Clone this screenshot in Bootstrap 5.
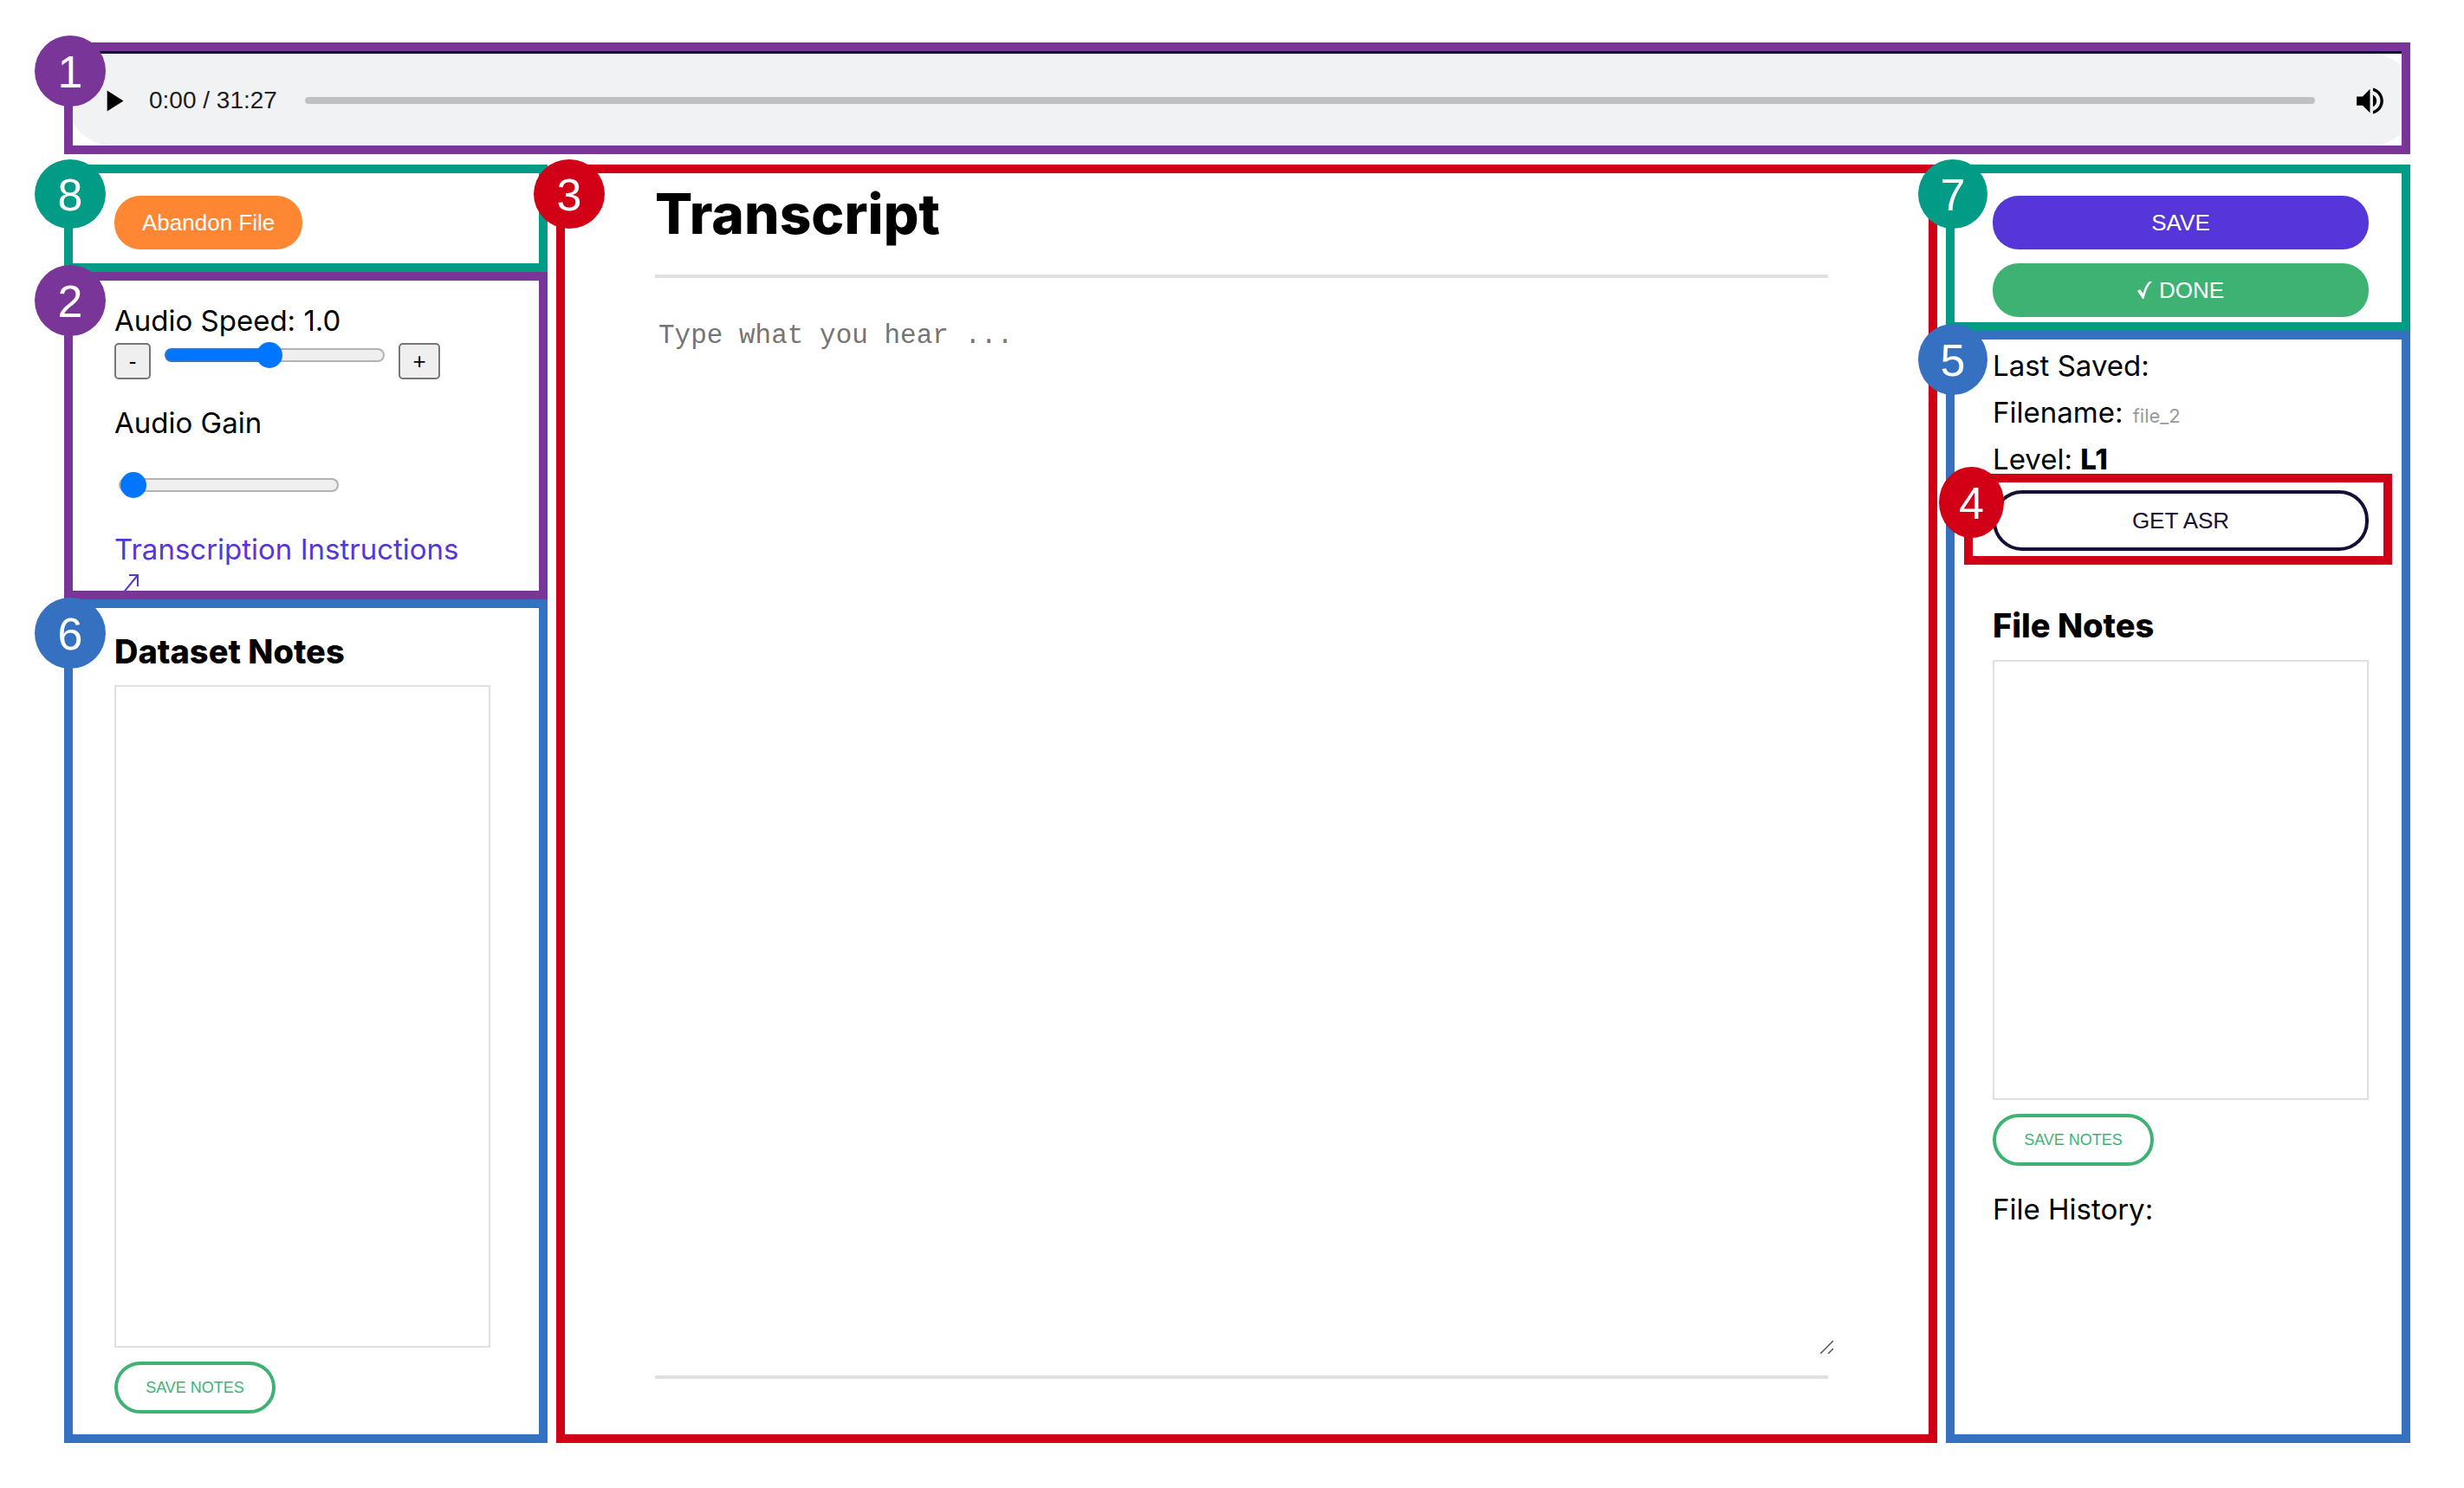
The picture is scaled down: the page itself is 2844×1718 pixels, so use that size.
<!DOCTYPE html>
<html lang="en">
<head>
<meta charset="utf-8">
<meta name="viewport" content="width=device-width, initial-scale=1">
<title>Transcript</title>
<link href="https://cdn.jsdelivr.net/npm/bootstrap@5.3.0/dist/css/bootstrap.min.css" rel="stylesheet">
<style>
  :root { --violet:#793698; --teal:#029b85; --crimson:#d10016; --azure:#3571c0; --ink:#160f38; --indigo:#5636d9; --leaf:#3eb273; --rule:#e0dfe4; }
  body { font-family: Inter, "Liberation Sans", sans-serif; font-size: 33px; line-height: 36px; color: #000; background: #fff; }
  .page { min-height: 100vh; padding: 49px 62px 52px 74px; gap: 12px; }
  .workspace { display: grid; grid-template-columns: 558fr 1594fr 536fr; gap: 10px; }
  .zone { position: relative; border: 10px solid var(--tone); }
  .violet { --tone: var(--violet); } .teal { --tone: var(--teal); } .crimson { --tone: var(--crimson); } .azure { --tone: var(--azure); }

  /* numbered markers over the corners of the zones */
  .marker { position: absolute; z-index: 5; width: 82px; height: 82px; left: -44px; top: -18px; padding-top: 2px; border-radius: 50%; background: var(--tone); color: #fff; font: 52px "Liberation Sans", sans-serif; display: flex; align-items: center; justify-content: center; }
  .marker-flat { top: -16px; height: 80px; }
  .marker-main { left: -36px; }
  .marker-side { left: -42px; width: 80px; }
  .marker-inner { left: -39px; width: 75px; }
  .marker-low { top: -12px; }

  .player-clip { overflow: hidden; border-top: 3px solid var(--ink); }
  .player { height: 106px; margin: 0 -17px 0 -7px; padding: 2px 33px 0; border-radius: 53px; background: #f1f2f4; font: 28px "Liberation Sans", sans-serif; color: #1c1c1c; }
  .player button { border: 0; padding: 0; background: none; line-height: 0; color: #000; }
  .player svg { width: 41px; height: 41px; fill: currentColor; }
  .clock { margin: 0 32px 0 21px; }
  .seek { appearance: none; -webkit-appearance: none; flex: 1 1 0; min-width: 0; height: 8px; border-radius: 4px; background: #bfc0c2; margin: 0 43px 0 0; }
  .seek::-webkit-slider-thumb { -webkit-appearance: none; width: 1px; height: 8px; background: transparent; }

  .pill { border: 0; border-radius: 30px; height: 62px; padding: 0 32px; font: 26px "Liberation Sans", sans-serif; color: #fff; }
  .pill-orange { background: #ff8633; } .pill-indigo { background: var(--indigo); } .pill-leaf { background: var(--leaf); }
  .pill-ink { height: 70px; border: 4px solid var(--ink); border-radius: 34px; background: #fff; color: var(--ink); }
  .pill-notes { width: 186px; height: 60px; padding: 0; border: 4px solid var(--leaf); background: #fff; color: var(--leaf); font-size: 18px; }
  .pill svg { width: 17px; height: 20px; margin-right: 8px; }

  .abandon { padding: 26px 48px 16px; }
  .audio { padding: 28px 48px 0; }
  .stepper { margin: 8px 0 32px; gap: 16px; }
  .step { height: 42px; border: 2px solid #767676; border-radius: 5px; background: #efefef; padding: 0; font: 26px "Liberation Sans", sans-serif; color: #000; }
  .step-down { width: 42px; } .step-up { width: 48px; }
  .slide { --fill: 0%; appearance: none; -webkit-appearance: none; width: 254px; height: 28px; margin: 0; background: none; display: block; }
  .slide::-webkit-slider-runnable-track { height: 16px; border: 2px solid transparent; border-radius: 8px;
    background: linear-gradient(90deg, #0075ff var(--fill), #efefef var(--fill)) padding-box, linear-gradient(90deg, #3673c6 var(--fill), #b2b2b2 var(--fill)) border-box; }
  .slide::-webkit-slider-thumb { -webkit-appearance: none; width: 30px; height: 30px; margin-top: -9px; border: 0; border-radius: 50%; background: #0075ff; }
  .speed { --fill: 48%; }
  .gain { margin: 40px 0 42px 5px; }
  .guide { color: var(--indigo); text-decoration: none; white-space: nowrap; display: block; }
  .guide svg { display: block; width: 40px; height: 30px; }

  h1 { font-size: 64px; line-height: 72px; font-weight: 800; margin: 0 0 34px; }
  h2 { font-size: 38px; line-height: 42px; font-weight: 800; margin: 0 0 18px; }
  b { font-weight: 800; }
  .notes { display: block; width: 100%; border: 2px solid var(--rule); resize: none; margin-bottom: 16px; padding: 8px; }
  .dataset { padding: 29px 56px 24px 48px; }
  .editor { padding: 11px 116px 64px 104px; }
  .rule { height: 4px; border: 0; opacity: 1; margin: 0; background: var(--rule); }
  .sheet { margin: 16px -8px 23px 0; position: relative; }
  .sheet textarea { border: 0; padding: 33px 4px 0; width: 100%; height: 100%; resize: none; display: block; font: 31px/36px "Liberation Mono", monospace; }
  .sheet textarea::placeholder { color: #757575; opacity: 1; }
  .grip { position: absolute; right: 2px; bottom: 2px; width: 15px; height: 15px; }
  .actions { padding: 26px 38px 6px 44px; gap: 16px; }
  .facts { padding: 12px 38px 0 44px; gap: 18px; }
  .facts div { height: 36px; }
  .file-id { font-size: 22px; line-height: 1; color: #999; margin-left: 2px; }
  .asr { margin: -1px 11px 0; padding: 9px 17px 6px 23px; }
  .filenotes { padding: 49px 38px 0 44px; }
  .filenotes h2 { margin-bottom: 19px; }
  .filenotes .notes { height: 508px; }
  .history { margin-top: 32px; }
</style>
<script src="https://cdn.jsdelivr.net/npm/bootstrap@5.3.0/dist/js/bootstrap.bundle.min.js"></script>
</head>
<body>
<div class="page d-flex flex-column">
  <header class="zone violet">
    <span class="marker">1</span>
    <div class="player-clip">
      <div class="player d-flex align-items-center">
        <button type="button" aria-label="Play"><svg viewBox="0 0 24 24"><path d="M8 5v14l11-7z"/></svg></button>
        <span class="clock">0:00 / 31:27</span>
        <input class="seek" type="range" min="0" max="1887" value="0" aria-label="Seek">
        <button type="button" aria-label="Mute"><svg viewBox="0 0 24 24"><path d="M3 9v6h4l5 5V4L7 9H3zm13.5 3c0-1.77-1.02-3.29-2.5-4.03v8.05c1.48-.73 2.5-2.25 2.5-4.02zM14 3.23v2.06c2.89.86 5 3.54 5 6.71s-2.11 5.85-5 6.71v2.06c4.01-.91 7-4.49 7-8.77s-2.99-7.86-7-8.77z"/></svg></button>
      </div>
    </div>
  </header>

  <main class="workspace flex-grow-1">
    <div class="d-flex flex-column">
      <section class="zone teal">
        <span class="marker marker-flat">8</span>
        <div class="abandon"><button type="button" class="pill pill-orange d-block">Abandon File</button></div>
      </section>
      <section class="zone violet">
        <span class="marker">2</span>
        <div class="audio">
          <label class="d-block" for="speed">Audio Speed: 1.0</label>
          <div class="stepper d-flex align-items-start">
            <button type="button" class="step step-down" aria-label="Slower">-</button>
            <input class="slide speed" id="speed" type="range" min="0.1" max="2" step="0.1" value="1">
            <button type="button" class="step step-up" aria-label="Faster">+</button>
          </div>
          <label class="d-block" for="gain">Audio Gain</label>
          <input class="slide gain" id="gain" type="range" min="1" max="10" value="1">
          <a class="guide" href="#">Transcription Instructions
            <svg viewBox="0 0 40 30" fill="none" stroke="currentColor" stroke-width="2"><path d="M17 12H27V25M27 12L9 34"/></svg></a>
        </div>
      </section>
      <section class="zone azure flex-grow-1 d-flex">
        <span class="marker marker-low">6</span>
        <div class="dataset d-flex flex-column flex-grow-1">
          <h2><label for="dataset-notes">Dataset Notes</label></h2>
          <textarea class="notes flex-grow-1" id="dataset-notes"></textarea>
          <button type="button" class="pill pill-notes">SAVE NOTES</button>
        </div>
      </section>
    </div>

    <section class="zone crimson d-flex flex-column">
      <span class="marker marker-flat marker-main">3</span>
      <div class="editor d-flex flex-column flex-grow-1">
        <h1><label for="transcript">Transcript</label></h1>
        <hr class="rule">
        <div class="sheet flex-grow-1">
          <textarea id="transcript" placeholder="Type what you hear ..."></textarea>
          <svg class="grip" viewBox="0 0 15 15" stroke="#555" stroke-width="1.5"><path d="M0 15L15 0M9 15L15 9"/></svg>
        </div>
        <hr class="rule">
      </div>
    </section>

    <div class="d-flex flex-column">
      <section class="zone teal">
        <span class="marker marker-flat marker-side">7</span>
        <div class="actions d-flex flex-column">
          <button type="button" class="pill pill-indigo">SAVE</button>
          <button type="button" class="pill pill-leaf d-flex align-items-center justify-content-center"><svg viewBox="0 0 17 20" fill="#fff"><path d="M0 11L3 9L6.500 14C8 8 11 2 14 0H17C12.500 4 9.500 11 7.500 20H6z"/></svg>DONE</button>
        </div>
      </section>
      <section class="zone azure flex-grow-1">
        <span class="marker marker-side">5</span>
        <div class="facts d-flex flex-column">
          <div>Last Saved:</div>
          <div>Filename: <span class="file-id">file_2</span></div>
          <div>Level: <b>L1</b></div>
        </div>
        <div class="zone crimson asr">
          <span class="marker marker-inner">4</span>
          <button type="button" class="pill pill-ink d-block w-100">GET ASR</button>
        </div>
        <div class="filenotes">
          <h2><label for="file-notes">File Notes</label></h2>
          <textarea class="notes" id="file-notes"></textarea>
          <button type="button" class="pill pill-notes d-block">SAVE NOTES</button>
          <div class="history">File History:</div>
        </div>
      </section>
    </div>
  </main>
</div>
</body>
</html>
